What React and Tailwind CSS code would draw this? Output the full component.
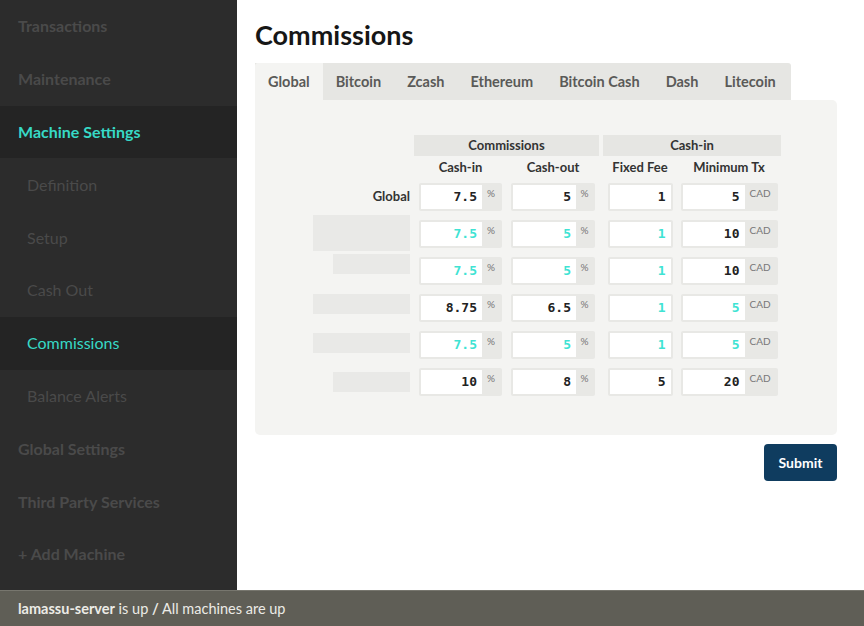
import React from 'react';

const font = { fontFamily: 'Lato, "Open Sans", sans-serif' };

const navItems = [
    { label: 'Transactions', level: 0 },
    { label: 'Maintenance', level: 0 },
    { label: 'Machine Settings', level: 0, active: true },
    { label: 'Definition', level: 1 },
    { label: 'Setup', level: 1 },
    { label: 'Cash Out', level: 1 },
    { label: 'Commissions', level: 1, active: true },
    { label: 'Balance Alerts', level: 1 },
    { label: 'Global Settings', level: 0 },
    { label: 'Third Party Services', level: 0 },
    { label: '+ Add Machine', level: 0 },
];

const tabs = ['Global', 'Bitcoin', 'Zcash', 'Ethereum', 'Bitcoin Cash', 'Dash', 'Litecoin'];

// value, isDefault (teal)
const rows = [
    { label: 'Global', blur: null, cells: [['7.5', false], ['5', false], ['1', false], ['5', false]] },
    { blur: 'w-[97px] h-[36px] mb-[2px]', cells: [['7.5', true], ['5', true], ['1', true], ['10', false]] },
    { blur: 'w-[77px] h-[20px] mb-[14px]', cells: [['7.5', true], ['5', true], ['1', true], ['10', false]] },
    { blur: 'w-[97px] h-[20px] mb-[8px]', cells: [['8.75', false], ['6.5', false], ['1', true], ['5', true]] },
    { blur: 'w-[97px] h-[20px] mb-[4px]', cells: [['7.5', true], ['5', true], ['1', true], ['5', true]] },
    { blur: 'w-[77px] h-[20px]', cells: [['10', false], ['8', false], ['5', false], ['20', false]] },
];

const Value = ({ v, teal }) => (
    <span
        className={`text-[13px] font-bold ${teal ? 'text-[#3fe3d3]' : 'text-[#222]'}`}
        style={{ fontFamily: '"DejaVu Sans Mono", "Liberation Mono", monospace' }}
    >
        {v}
    </span>
);

const Cell = ({ v, teal, addon, inputW }) => (
    <div className="flex h-[28px] rounded-[2px] border-2 border-[#e8e8e5] bg-[#e8e8e5]">
        <div className={`${inputW} h-full bg-white flex items-center justify-end pr-[5px]`}>
            <Value v={v} teal={teal} />
        </div>
        {addon && (
            <div className="flex-1 flex justify-center pt-[3px] text-[10px] text-[#777] leading-none">
                {addon}
            </div>
        )}
    </div>
);

const App = () => {
    return (
        <div className="w-[864px] h-[626px] flex flex-col overflow-hidden bg-white" style={font}>
            <div className="flex flex-1 min-h-0">
                <aside className="w-[237px] bg-[#2c2c2c] flex flex-col">
                    {navItems.map((item) => (
                        <div
                            key={item.label}
                            className={`h-[52.8px] flex items-center text-[16px] ${
                                item.level === 0 ? 'pl-[18px] font-bold' : 'pl-[27px]'
                            } ${item.active ? 'bg-[#242424] text-[#37d9c6]' : 'text-[#4a4a4a]'}`}
                        >
                            {item.label}
                        </div>
                    ))}
                </aside>

                <main className="flex-1 pl-[18px] pr-[27px]">
                    <h1 className="text-[27px] font-bold text-[#161616] mt-[18px] leading-[34px] mb-[11px]">
                        Commissions
                    </h1>

                    <div className="flex w-[536px] bg-[#e6e6e3] rounded-tr-[3px]">
                        {tabs.map((t, i) => (
                            <div
                                key={t}
                                className={`h-[37px] flex items-center px-[13px] text-[14.5px] font-bold text-[#5a5a58] ${
                                    i === 0 ? 'bg-[#f4f4f2] rounded-tl-[3px]' : ''
                                }`}
                            >
                                {t}
                            </div>
                        ))}
                    </div>

                    <div className="bg-[#f4f4f2] w-[582px] h-[335px] rounded-b-[5px] rounded-tr-[5px] pt-[35px]">
                        <div className="flex text-[13px] font-bold text-[#333]">
                            <div className="w-[159px]" />
                            <div className="w-[185px] h-[21px] bg-[#e6e6e3] flex items-center justify-center">
                                Commissions
                            </div>
                            <div className="w-[4px]" />
                            <div className="w-[178px] h-[21px] bg-[#e6e6e3] flex items-center justify-center">
                                Cash-in
                            </div>
                        </div>
                        <div className="flex text-[13px] font-bold text-[#333] h-[23px] items-center">
                            <div className="w-[159px]" />
                            <div className="w-[93px] text-center">Cash-in</div>
                            <div className="w-[92px] text-center">Cash-out</div>
                            <div className="w-[4px]" />
                            <div className="w-[74px] text-center">Fixed Fee</div>
                            <div className="w-[104px] text-center">Minimum Tx</div>
                        </div>

                        <div className="flex flex-col mt-[4px] gap-[9px]">
                            {rows.map((r, idx) => (
                                <div key={idx} className="flex items-center h-[28px]">
                                    <div className="w-[155px] flex justify-end items-center h-[28px] overflow-visible">
                                        {r.label ? (
                                            <span className="text-[13px] font-bold text-[#333]">{r.label}</span>
                                        ) : (
                                            <div className={`${r.blur} bg-[#e9e9e7] shrink-0`} />
                                        )}
                                    </div>
                                    <div className="w-[4px]" />
                                    <div className="w-[93px] flex justify-center">
                                        <div className="w-[83px]">
                                            <Cell v={r.cells[0][0]} teal={r.cells[0][1]} addon="%" inputW="w-[61px]" />
                                        </div>
                                    </div>
                                    <div className="w-[92px] flex justify-center">
                                        <div className="w-[84px]">
                                            <Cell v={r.cells[1][0]} teal={r.cells[1][1]} addon="%" inputW="w-[63px]" />
                                        </div>
                                    </div>
                                    <div className="w-[4px]" />
                                    <div className="w-[74px] flex justify-center">
                                        <div className="w-[65px]">
                                            <Cell v={r.cells[2][0]} teal={r.cells[2][1]} inputW="w-full" />
                                        </div>
                                    </div>
                                    <div className="w-[104px] flex justify-center">
                                        <div className="w-[97px]">
                                            <Cell v={r.cells[3][0]} teal={r.cells[3][1]} addon="CAD" inputW="w-[62px]" />
                                        </div>
                                    </div>
                                </div>
                            ))}
                        </div>
                    </div>

                    <div className="w-[582px] flex justify-end mt-[9px]">
                        <button className="w-[73px] h-[37px] rounded-[4px] bg-[#0f3c5f] text-white text-[14px] font-bold">
                            Submit
                        </button>
                    </div>
                </main>
            </div>

            <footer className="h-[36px] bg-[#5f5e56] border-t border-[#77766e] flex items-center pl-[18px] text-[14.5px] text-[#ecebe6]">
                <span className="font-bold">lamassu-server</span>
                <span>&nbsp;is up&nbsp;</span>
                <span className="font-bold">/</span>
                <span>&nbsp;All machines are up</span>
            </footer>
        </div>
    );
};

export default App;
